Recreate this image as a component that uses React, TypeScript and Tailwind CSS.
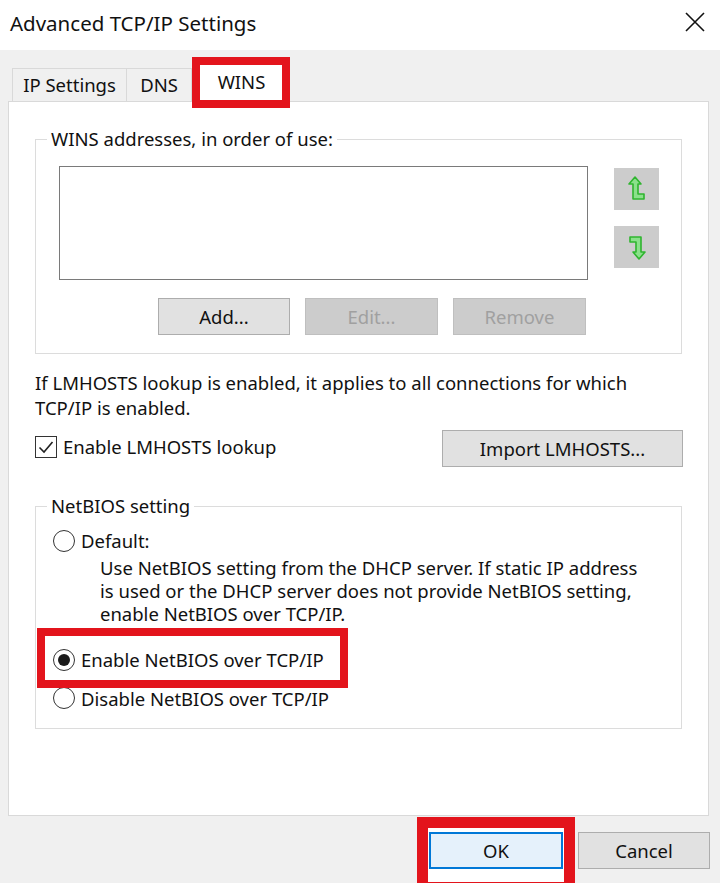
import React from 'react'

const font = { fontFamily: '"Noto Sans", "Open Sans", sans-serif' }

const ArrowUp = () => (
  <svg width="18" height="28" viewBox="0 0 18 28">
    <path d="M7 2 L1 9 L5 9 L5 24 L16 24 L16 19 L10 19 L10 9 L13 9 Z" fill="#8be08b" stroke="#2fb52f" strokeWidth="1.6" strokeLinejoin="round" />
  </svg>
)

const ArrowDown = () => (
  <svg width="18" height="28" viewBox="0 0 18 28">
    <path d="M11 26 L17 19 L13 19 L13 4 L2 4 L2 9 L8 9 L8 19 L5 19 Z" fill="#8be08b" stroke="#2fb52f" strokeWidth="1.6" strokeLinejoin="round" />
  </svg>
)

const Radio = ({ checked }: { checked?: boolean }) => (
  <div className="w-[22px] h-[22px] rounded-full border border-[#333] bg-white flex items-center justify-center shrink-0">
    {checked && <div className="w-[12px] h-[12px] rounded-full bg-[#1a1a1a]" />}
  </div>
)

export default function App() {
  return (
    <div className="relative w-[720px] h-[883px] bg-[#f0f0f0] flex flex-col text-[#111] overflow-hidden text-[18.5px]" style={font}>
      {/* title bar */}
      <div className="h-[50px] bg-white flex items-center justify-between pl-[10px] pr-[14px] shrink-0">
        <div className="text-[20.5px] leading-none mt-[-4px]">Advanced TCP/IP Settings</div>
        <svg width="22" height="22" viewBox="0 0 22 22" className="mt-[-6px]">
          <path d="M2 2 L20 20 M20 2 L2 20" stroke="#111" strokeWidth="1.6" />
        </svg>
      </div>

      {/* tabs */}
      <div className="flex items-end pl-[12px] h-[51px] shrink-0">
        <div className="w-[115px] h-[33px] flex items-center justify-center border border-b-0 border-[#d9d9d9] bg-[#f0f0f0]">IP Settings</div>
        <div className="w-[65px] h-[33px] flex items-center justify-center border border-l-0 border-b-0 border-[#d9d9d9] bg-[#f0f0f0]">DNS</div>
        <div className="ml-[8px] w-[83px] h-[39px] flex items-start justify-center pt-[5px] bg-white relative z-10 mb-[-1px]">WINS</div>
      </div>

      {/* panel */}
      <div className="ml-[8px] w-[701px] h-[715px] bg-white border border-[#d9d9d9] shrink-0 pt-[25px] px-[26px]">
        <fieldset className="border border-[#dcdcdc] pl-[11px] pb-[18px]">
          <legend className="px-[4px] leading-[24px]">WINS addresses, in order of use:</legend>
          <div className="ml-[12px]">
            <div className="flex mt-[15px]">
              <div className="w-[529px] h-[114px] border border-[#7a7a7a] bg-white" />
              <div className="ml-[26px] mt-[2px] flex flex-col gap-[16px]">
                <div className="w-[45px] h-[42px] bg-[#cccccc] flex items-center justify-center"><ArrowUp /></div>
                <div className="w-[45px] h-[42px] bg-[#cccccc] flex items-center justify-center"><ArrowDown /></div>
              </div>
            </div>
            <div className="flex justify-end gap-[15px] w-[527px] mt-[18px]">
              <div className="w-[132px] h-[37px] bg-[#e1e1e1] border border-[#adadad] flex items-center justify-center">Add...</div>
              <div className="w-[133px] h-[37px] bg-[#cccccc] border border-[#bfbfbf] flex items-center justify-center text-[#a0a0a0]">Edit...</div>
              <div className="w-[133px] h-[37px] bg-[#cccccc] border border-[#bfbfbf] flex items-center justify-center text-[#a0a0a0]">Remove</div>
            </div>
          </div>
        </fieldset>

        <p className="mt-[16px] leading-[25px]">
          If LMHOSTS lookup is enabled, it applies to all connections for which<br />TCP/IP is enabled.
        </p>

        <div className="flex items-center justify-between mt-[10px]">
          <div className="flex items-center gap-[6px] mt-[-4px]">
            <div className="w-[22px] h-[22px] border border-[#333] bg-white flex items-center justify-center">
              <svg width="16" height="14" viewBox="0 0 16 14"><path d="M1.5 7.5 L6 12 L14.5 2" fill="none" stroke="#222" strokeWidth="1.6" /></svg>
            </div>
            <span>Enable LMHOSTS lookup</span>
          </div>
          <div className="w-[241px] h-[37px] bg-[#e1e1e1] border border-[#adadad] flex items-center justify-center mr-[-1px]">Import LMHOSTS...</div>
        </div>

        <fieldset className="mt-[27px] border border-[#dcdcdc] h-[235px] pl-[11px]">
          <legend className="px-[4px] leading-[24px]">NetBIOS setting</legend>
          <div className="ml-[6px]">
            <div className="flex items-center gap-[6px] mt-[9px]">
              <Radio />
              <span>Default:</span>
            </div>
            <p className="ml-[47px] leading-[23px] mt-[1px]">
              Use NetBIOS setting from the DHCP server. If static IP address<br />
              is used or the DHCP server does not provide NetBIOS setting,<br />
              enable NetBIOS over TCP/IP.
            </p>
            <div className="flex items-center gap-[6px] mt-[21px]">
              <Radio checked />
              <span>Enable NetBIOS over TCP/IP</span>
            </div>
            <div className="flex items-center gap-[6px] mt-[11px]">
              <Radio />
              <span>Disable NetBIOS over TCP/IP</span>
            </div>
          </div>
        </fieldset>
      </div>

      {/* bottom buttons */}
      <div className="flex justify-end gap-[15px] pr-[10px] mt-[16px]">
        <div className="relative z-10 w-[134px] h-[37px] bg-[#e5f1fb] border-2 border-[#0078d7] flex items-center justify-center">OK</div>
        <div className="relative z-10 w-[132px] h-[37px] bg-[#e1e1e1] border border-[#adadad] flex items-center justify-center">Cancel</div>
      </div>

      {/* red highlight boxes */}
      <div className="absolute left-[192px] top-[57px] w-[98px] h-[51px] border-[8px] border-[#e3141c] z-20" />
      <div className="absolute left-[37px] top-[628px] w-[311px] h-[60px] border-[8px] border-[#e3141c] z-20" />
      <div className="absolute left-[417px] top-[817px] w-[158px] h-[76px] border-[11px] border-[#e3141c] bg-white z-0" />
    </div>
  )
}
